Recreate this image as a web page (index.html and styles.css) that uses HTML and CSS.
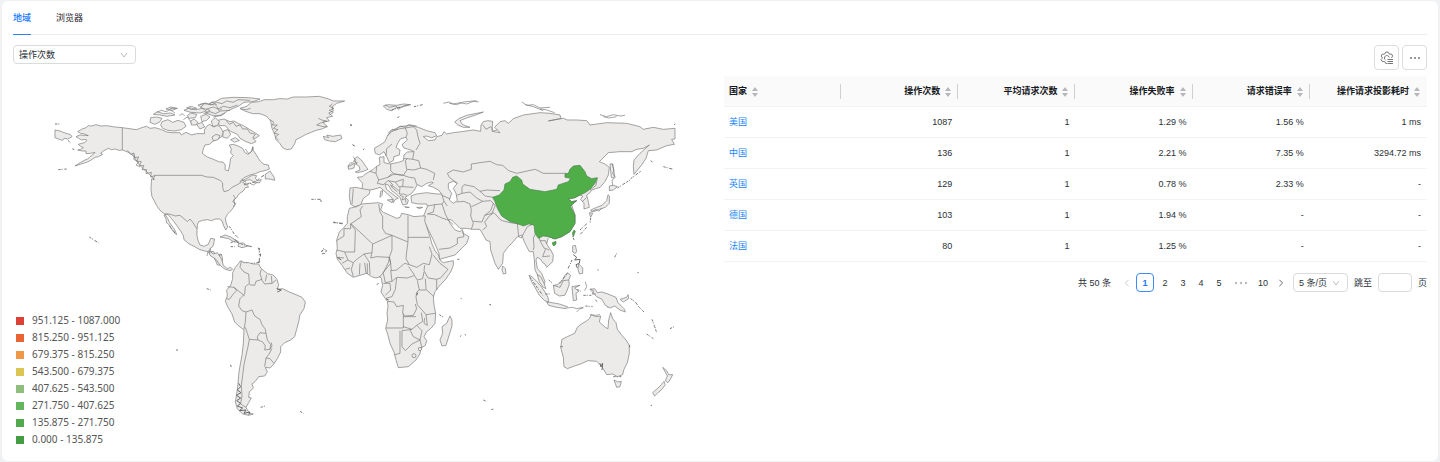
FILE: index.html
```html
<!DOCTYPE html>
<html lang="zh-CN">
<head>
<meta charset="utf-8">
<title>地域</title>
<link rel="stylesheet" href="styles.css">
</head>
<body>
<main class="card">
  <nav class="tabs" role="tablist">
    <button class="tab tab-active" role="tab" aria-selected="true">地域</button>
    <button class="tab" role="tab" aria-selected="false">浏览器</button>
  </nav>
  <div class="content">
    <section class="region">
      <div class="picker metric">
        <select class="picker-control" aria-label="指标"><option>操作次数</option></select>
        <svg class="chevron" viewBox="0 0 10 10"><path d="M2 3l3 4 3-4"/></svg>
      </div>
      <svg class="map" viewBox="13 64 711 384" role="img" aria-label="世界地图">
        <!-- North and Central America -->
        <g transform="translate(40 85) scale(.33333)">
          <path class="land" d="M45 135L60 138 72 143 92 149 96 155 84 162 72 160 68 166 58 163 45 158Z"/>
          <path class="land" d="M247 128L224 126 200 122 183 123 167 119 155 123 145 122 138 128 124 133 113 140 122 145 134 147 145 152 134 151 120 150 108 155 116 160 125 165 135 163 141 166 134 173 125 175 115 178 122 184 130 188 122 193 113 195 126 198 138 198 138 206 152 205 165 202 158 210 150 215 143 222 135 225 122 232 105 243 120 238 140 232 152 226 165 217 175 215 188 208 182 205 190 198 205 190 215 194 225 192 236 196 247 195 258 199 270 204 278 212 286 222 295 236 306 248 318 259 328 268 343 284 335 281 334 293 333 315 336 335 343 348 350 362 360 376 375 388 383 400 388 412 394 420 400 428 406 438 410 449 402 442 394 432 388 420 380 414 378 402 372 390 384 388 392 398 402 410 412 424 422 438 430 452 432 464 446 476 462 484 480 494 494 498 504 500 512 510 522 518 526 525 532 540 545 540 548 522 544 508 524 508 522 500 506 500 511 490 519 484 524 462 512 460 505 478 492 484 480 480 474 466 471 452 471 436 472 420 476 410 488 406 502 404 514 407 526 402 538 402 546 407 550 420 557 435 563 426 558 412 556 400 562 388 572 378 580 368 584 358 582 344 590 338 598 326 610 318 616 308 626 306 616 297 608 292 618 286 630 284 640 290 658 294 664 284 652 286 646 280 650 272 638 270 624 278 600 290 612 278 630 270 646 266 660 260 678 256 688 252 685 240 672 238 662 230 655 220 648 208 640 196 638 185 634 200 624 208 614 202 608 190 596 184 580 178 568 180 574 192 572 204 580 212 572 220 570 234 568 246 565 258 555 254 556 240 550 232 536 230 518 222 502 216 487 205 490 192 495 180 508 178 520 168 534 162 545 155 550 142 542 128 532 120 522 126 508 118 500 124 493 135 494 146 470 146 455 150 438 142 424 150 420 143 396 143 380 141 362 133 345 128 330 130 320 124 305 128 290 134 275 132Z"/>
          <path class="line" d="M247 128V195M343 271H485L500 276 520 277 540 286 548 294 548 308 552 320 566 316 576 307 590 300 604 292M375 386L392 388 405 393 420 391 432 401 442 410 450 402 460 414 468 428 472 430M504 500L501 513M511 490L513 505M516 510L524 508M524 520L532 515 546 508M544 540L535 530"/>
          <path class="land" d="M332 98L350 96 366 100 358 112 344 118 330 112ZM366 110L384 104 398 112 414 106 432 112 438 124 424 134 404 138 384 136 368 130 362 120ZM442 92L452 84 470 88 466 98 448 100ZM452 108L462 102 474 112 468 120 454 120ZM482 94L498 88 510 96 500 106 486 110Z"/>
          <path class="land" d="M340 88L352 80 370 86 392 84 405 90 380 94 360 90ZM378 72L392 66 412 70 396 76ZM432 76L450 68 468 74 486 70 500 78 480 84 452 82ZM474 60L492 56 510 60 500 66 482 66Z"/>
          <path class="land" d="M540 456L556 450 572 456 588 466 596 470 582 471 566 461ZM596 475L610 474 622 484 606 488 594 484ZM676 268L690 258 702 276 704 286 690 282 676 282Z"/>
          <path class="line" d="M262 196L272 208 282 204 284 218 296 216 290 228 304 230 298 242 312 242 306 254 320 254 318 266 334 262 332 276 344 272 340 284M276 206L286 216 280 222 296 232 288 240 300 246M580 330L586 340 578 350 588 356 580 366M605 282L618 292 612 300 628 294 640 300 652 292"/>
          <path class="rough" d="M388 422L408 448M568 424L582 446 598 462M572 485H584M628 484H638M655 488L662 510 656 530M148 456L176 474M55 254L80 252M84 166L92 174M97 191L103 194M45 117H58M600 530L630 536 660 532"/>
        </g>
        <!-- Arctic archipelago, Greenland, Iceland -->
        <g transform="translate(150 85) scale(.33333)">
          <path class="land" d="M178 56L200 48 214 40 250 37 296 38 330 42 310 50 282 52 268 62 250 70 232 78 214 92 190 92 166 84 180 76 152 68 162 56 200 60 188 50Z"/>
          <path class="line" d="M150 58L168 54 182 60 200 52 216 56 230 48 250 52 264 44 300 46M170 72L190 66 204 72 220 64 240 68 262 60M160 86L180 80 196 86 212 78 240 76M190 96L208 92 225 84M200 64L206 76 216 72M110 68L124 64 140 70 126 74ZM20 82L34 76 48 80 60 74 75 84M60 70L80 70M100 104L112 96 124 112M88 92L96 86 104 92"/>
          <path class="land" d="M203 106L222 102 240 110 252 108 266 116 280 122 300 134 316 144 328 152 316 160 308 158 318 170 304 176 288 170 270 160 262 148 240 138 226 122 208 122Z"/>
          <path class="land" d="M184 108L196 98 208 110 202 122 188 124ZM140 118L156 112 164 126 150 132ZM220 138L234 134 242 148 232 160 218 156ZM186 156L198 148 210 152 204 164 190 168ZM242 164L256 158 268 166 254 172Z"/>
          <path class="line" d="M228 106L238 118 250 112 258 124 270 120 278 132 292 132 300 144 316 148 310 156M286 192L296 206 306 198 310 186"/>
          <path class="land" d="M270 70L290 64 304 52 326 50 344 44 370 44 388 41 412 42 430 36 470 36 508 34 536 42 550 48 584 48 560 55 546 66 550 78 536 84 548 94 530 98 538 108 518 112 532 124 516 132 498 136 484 142 468 148 454 156 438 164 434 176 424 192 410 194 398 188 390 176 378 164 374 148 366 130 362 108 350 94 330 86 308 86 284 78Z"/>
          <path class="line" d="M360 104L372 112 366 120 382 120 370 130 384 134 372 144 386 148 376 156 386 166M505 100L518 106 530 108 512 114 500 120 516 124 532 126M548 56L538 64 552 70 538 76 550 82 538 90M272 72L290 74 302 70"/>
          <path class="land" d="M520 154L536 158 530 150 548 154 572 150 576 160 556 170 538 168 524 164Z"/>
          <path class="rough" d="M290 298L318 290 330 278 344 270M484 343H514M600 120L606 121M608 180L613 183"/>
        </g>
        <!-- South America -->
        <g transform="translate(170 240) scale(.33333)">
          <path class="land" d="M117 32L130 42 142 38 155 58 160 76 172 86 182 82 188 88 180 92 166 88 152 78 138 58 120 46Z"/>
          <path class="land" d="M212 62L222 68 236 68 250 72 266 72 272 84 284 94 294 102 308 104 320 116 326 134 322 148 338 146 358 156 378 164 396 172 406 186 402 206 390 224 386 246 380 268 374 290 362 300 344 308 332 320 332 336 322 356 310 374 300 384 286 382 292 396 284 408 266 410 256 424 246 432 250 444 238 456 236 472 244 474 236 488 228 502 238 520 250 522 236 526 218 522 202 506 196 486 200 462 204 432 206 404 210 378 216 346 220 310 222 270 206 258 194 246 186 222 174 202 166 184 172 168 170 150 182 136 188 116 188 98 196 82 206 70Z"/>
          <path class="line" d="M214 64L210 82 222 96 236 102 238 130 226 140 224 162 210 176 206 198 216 212 228 216 226 246 222 268M238 134L254 136 258 124 276 118 270 102 274 88M274 118L284 132 306 130 318 120M290 104L286 124M304 108L306 130M172 140L192 142 200 152 190 162 178 178 170 176M192 142L224 168M228 216L246 210 254 228 270 238 276 254 286 268 288 280 270 278 262 290 264 300 238 298 232 280 226 262M264 300L278 306 286 318 284 330 300 328 302 314 292 300 288 280M300 328L306 318 304 308M306 326L296 344 288 354 284 380M288 354L300 356 312 370M238 298L234 320 228 346 222 374 218 406 214 436 216 468 212 492 228 502"/>
          <path class="line strong" d="M206 430L212 440 202 450 213 458 199 466 212 474 200 482 212 490 202 498 218 504 208 512 228 510 222 520 240 516 236 524M320 146L334 150 322 156"/>
          <path class="rough" d="M268 24V46M268 60V68M110 146L122 150M272 502L286 498M390 514L400 520M182 374L184 384M18 330H24M455 36L460 26 470 32 462 42M182 8L194 4 214 12 228 16 244 20M200 2L190 -2"/>
        </g>
        <!-- Europe and Asia -->
        <g transform="translate(320 90) scale(.33333)">
          <path class="land" d="M90 294L108 292 126 296 128 280 112 262 128 260 136 252 150 244 160 238 168 230 180 224 178 202 192 200 192 218 210 222 232 218 250 212 252 195 262 186 282 185 272 180 252 174 246 164 262 150 258 142 242 146 234 158 228 172 240 180 238 195 222 200 220 212 208 218 200 200 192 185 178 195 166 190 163 175 180 165 195 155 202 138 214 122 240 110 270 106 295 112 320 122 345 128 350 137 335 143 318 138 310 140 325 152 345 150 350 140 366 136 372 125 380 132 400 128 425 125 460 120 482 124 483 105 490 95 503 92 518 94 516 124 540 128 524 112 540 95 555 92 565 100 580 86 610 75 660 68 690 70 720 75 723 85 685 93 730 85 742 90 770 90 800 92 810 105 860 98 920 100 960 110 970 118 1000 112 1030 118 1065 115V147L1055 148 1063 163 1040 167 1010 180 985 182 978 205 965 225 942 253 940 230 942 210 960 190 988 165 970 175 950 178 935 185 900 185 865 188 838 215 855 222 868 232 865 255 855 275 840 292 815 300 810 308 800 315 805 335 808 352 792 357 792 340 782 328 788 318 780 315 765 323 745 327 755 335 770 332 755 345 765 375 765 400 750 425 725 440 705 447 690 440 684 446 680 462 692 480 700 495 698 515 680 532 675 522 668 518 662 508 652 502 648 510 652 535 665 550 675 575 670 590 658 565 645 540 643 510 640 485 628 485 615 460 605 435 590 442 580 455 565 470 550 490 548 520 535 538 525 520 512 480 510 455 498 450 490 435 480 418 455 418 440 415 420 415 410 405 395 390 385 388 390 400 405 420 420 425 427 418 430 430 447 440 440 460 405 495 358 508 357 490 340 450 318 405 308 388 312 375 322 350 320 342 295 342 275 338 273 318 290 312 320 308 350 312 365 312 355 300 340 292 325 287 340 278 334 276 320 280 305 290 292 284 283 300 275 310 262 318 255 322 265 330 262 342 248 345 240 322 228 312 215 302 205 285 195 282 200 298 225 318 235 325 226 328 220 338 216 324 195 305 180 292 165 297 150 300 148 312 130 325 122 345 105 350 92 343 88 320Z"/>
          <path class="sea" d="M385 280L400 274 412 280 400 295 408 310 412 332 400 340 388 330 395 310 385 295Z"/>
          <path class="line" d="M216 162L200 176 198 198M202 138L216 124 240 116 256 114 262 130 258 142M256 114L280 110 290 120 294 140 300 160 288 180M282 185L278 208 262 206 252 206M278 208L296 212 302 234 282 240 262 238 250 256 222 252 212 242 212 222M302 234L320 238 344 250 340 270M262 206L256 212 260 238M170 230L168 250 176 270 172 280 190 284M168 250L150 244M176 270L204 262 216 250M204 262L222 252 250 256 268 262 284 264 290 284M190 284L204 272 226 276 250 268 248 290 236 290 226 276M248 290L280 292M240 292L238 312 250 312 262 316M210 284L224 292 236 302M100 296L96 342M126 296L150 300M366 316L384 324 390 326M365 312L372 334 366 342 344 344 322 348M372 334L382 348M366 342L376 372 384 388M322 372L344 374 366 384 384 390 400 404M344 344L340 366 322 372M410 336L432 334 450 342 454 360 452 378 460 400 454 418M388 262L382 250 400 240 430 246 454 238 454 222 480 218 510 214 530 224 548 226 566 242 590 250 636 240 646 238 670 250 700 250 740 250M412 280L388 262M426 292L432 284 462 290 480 304 496 318 520 322M426 292V310L410 316M426 310L450 306 470 324 488 334 472 342 454 350M480 304L500 300 540 302M488 334L512 332 520 340 512 362 494 376 486 396 460 394M494 376L516 370 526 346 518 340M488 420L500 410 494 396 510 376 522 368 540 388 546 392 570 398 596 402 600 388 636 402M592 398L596 440 604 444M604 444L610 432 622 410 640 402M646 432L640 444 642 470 640 480M656 434L660 452 676 452 680 462M656 434L672 426 684 432 698 446M660 452L672 474 688 480M676 478L668 500 690 498M800 322L788 334M357 478L390 474 412 462 412 444 432 440 428 424M810 300L828 286 832 264"/>
          <path class="china" d="M518 322L538 315 552 300 555 282 570 275 578 262 590 258 605 270 608 282 630 298 675 305 710 298 715 285 745 275 752 265 735 262 735 252 745 250 750 238 760 228 780 226 795 245 800 258 815 266 832 263 825 280 810 298 795 308 780 315 765 323 745 327 755 335 770 332 755 345 752 350 765 375 765 400 750 425 725 440 705 447 685 440 670 438 655 445 645 430 642 405 626 402 610 408 590 400 570 395 545 378 532 355 525 335Z"/>
          <path class="china" d="M697 458L708 454 708 462 702 468 698 464ZM757 430L762 420 766 424 760 440Z"/>
          <!-- Islands around Europe -->
          <path class="land" d="M106 246L120 240 118 230 108 222 104 206 112 200 124 210 130 218 138 230 144 238 130 244 112 248ZM84 228L92 218 104 220 102 234 86 238ZM182 304L188 302 186 316 180 322ZM202 330L220 328 216 338ZM254 350L268 352 258 353ZM290 352H308L298 356Z"/>
          <path class="land" d="M190 48L204 44 230 46 250 42 272 44 250 50 228 54 214 62 200 58ZM404 96L416 86 440 76 470 70 490 66 470 74 440 84 420 92 428 104 450 112 430 112 412 104Z"/>
          <path class="line" d="M195 44L208 52 228 48 236 58 250 48 268 44M370 40L386 36 400 42 420 38 440 42 460 34 476 36M388 40L410 44 430 36 470 32M606 36L620 46 640 44 660 54 690 52M616 44L640 50 670 62M660 56L680 60 704 68M840 74L860 80 880 74 900 78 915 76M850 80L866 84 890 80M204 130L216 118 228 120 240 108 256 112 266 104 290 108"/>
          <path class="line" d="M100 200L106 210 100 214 112 218 106 224M84 230L100 222M206 272L218 284 214 290 232 306M240 316L250 320 246 330 256 326 258 338M488 104L498 118 512 110 520 122 532 120"/>
          <path class="rough" d="M215 60L240 52M282 50L308 44M130 180L132 176M232 83L238 80M90 104L96 106M98 164L104 168M0 332L6 334M40 396L70 402"/>
          <!-- Sakhalin, Japan, Korea -->
          <path class="land" d="M870 222L878 222 884 258 880 264 874 262ZM868 288L880 286 892 290 880 300 868 302ZM812 360L830 352 846 346 860 332 864 314 868 318 868 340 856 352 838 358 818 366ZM808 368L818 370 812 382Z"/>
          <path class="line" d="M876 220L882 240 878 250 886 262 876 270 878 286M812 366L830 358 836 364 846 354"/>
          <path class="rough" d="M892 294L930 270M932 266L962 244M812 384L810 398M800 412L780 434M992 212L1000 218M1030 230L1060 238M1062 104L1066 102"/>
        </g>
        <!-- Africa -->
        <g transform="translate(320 180) scale(.33333)">
          <path class="land" d="M88 85L110 80 125 72 150 70 175 68 188 72 182 90 190 97 215 108 230 115 240 112 245 100 265 104 282 110 304 108 316 108 314 122 322 146 330 170 336 192 345 212 355 225 360 240 370 248 400 242 400 256 392 276 375 300 358 318 345 335 340 352 342 375 347 400 345 430 334 444 320 455 312 470 320 482 316 496 302 505 300 522 288 540 265 560 235 563 228 540 222 516 210 490 204 466 197 445 203 420 201 400 204 380 202 364 192 350 183 336 188 316 184 296 180 290 168 294 155 290 140 280 120 286 100 292 82 280 66 256 52 238 48 220 52 206 50 180 58 156 72 142 82 130 82 110Z"/>
          <path class="line" d="M72 146H92V132L124 110 120 90 128 78M92 130L158 192 216 166 196 160 188 146 188 110 180 96 176 72M72 146V168L50 182M92 132L106 150 104 216 76 216 50 210M158 192L156 218 132 222 108 240 100 248 84 240 74 216M216 166L264 186V106M264 172H328M264 186L260 216 258 236 268 254 254 250 230 270 214 272 212 250 208 232 216 210 216 166M156 218L152 234 170 230 208 232 206 246 190 278 178 292M132 222L148 246 150 284M120 250L118 284M134 248L138 280M142 250V282M100 248L94 268 100 290M84 240L66 250M76 268L90 264M52 232L72 234M208 232L212 250 188 280M190 280L196 308 216 304 212 270M216 304L230 292 262 294 284 286 266 260M268 254L290 262 310 250 328 254 336 222 328 200M314 256L312 272 324 294 350 298 362 294 384 268 360 250 340 226M350 298V330M312 276L308 296 292 300 284 288M316 296L318 328 342 350M292 302L298 330 290 336 288 352 292 374 308 392 318 404 346 400M298 330H318M230 294L226 328 216 350 200 354M190 310H210L212 330 196 346M202 364L222 366 230 380 250 376 248 400 256 408 280 406 290 386 286 372M250 400V444H198M250 440L276 448 290 436 308 424 304 398M250 410L288 410M276 448L246 452V500L256 512 276 492 300 480 306 452 290 436M240 452V520L224 524M270 450L280 470 300 480 306 504M318 404L322 436 312 430 314 414"/>
          <circle class="land" cx="282" cy="527" r="6"/>
          <circle class="land" cx="300" cy="507" r="5"/>
          <path class="land" d="M390 408L396 420 396 438 388 464 378 496 366 498 360 480 368 460 366 440 380 430Z"/>
          <path class="line strong" d="M52 232L64 240M290 346L294 338M198 356L206 360"/>
          <path class="rough" d="M358 404L370 412M420 470L424 466M434 463L438 466M4 214L14 208M6 222L16 218M40 128L68 130M412 238H418M422 356H425M510 374H513M170 314L176 310"/>
        </g>
        <!-- South-East Asia and Oceania -->
        <g transform="translate(480 220) scale(.33333)">
          <path class="land" d="M68 138L76 146 78 160 70 162 66 150ZM147 165L158 172 170 184 184 200 196 218 204 232 206 246 194 242 178 226 166 204 154 184ZM200 246L216 248 238 252 262 260 258 266 230 262 206 256ZM172 164L182 170 192 190 198 206 190 202 178 186ZM220 196L232 194 246 184 254 168 262 158 272 166 266 180 268 192 262 210 254 226 238 228 224 220ZM278 78L286 76 290 94 286 100 278 96ZM296 132L308 144 308 160 298 162 294 148ZM276 200L300 196 284 204 296 214 288 220 290 240 280 242 278 222Z"/>
          <path class="line" d="M220 196L240 202 250 182 266 180M384 222V264"/>
          <path class="land" d="M330 208L344 206 352 218 366 216 384 222 408 232 414 248 432 266 436 276 420 270 404 258 390 264 376 256 366 238 350 230ZM420 238L440 232 444 224 446 236 430 246Z"/>
          <path class="land" d="M392 278L398 296 408 308 412 328 424 344 438 360 448 376 448 400 442 428 432 448 428 464 412 470 398 462 380 464 372 450 364 438 350 424 324 422 302 432 284 438 262 446 252 440 250 412 242 382 246 358 262 350 284 340 292 322 304 312 318 304 328 296 334 284 348 290 362 288 358 306 376 322 384 326 386 300ZM402 480L414 486 424 484 420 500 410 502Z"/>
          <path class="land" d="M548 442L560 452 566 464 578 464 572 476 564 488 556 482 562 468ZM552 484L556 494 546 508 532 520 524 528 518 518 532 506 544 494Z"/>
          <path class="line strong" d="M280 104L290 112 284 120 300 118 298 130 288 134 292 144M360 430L362 440 368 430 366 450M248 380H242"/>
          <path class="line" d="M260 264L278 262 290 266 310 262M290 276L300 266 310 264M316 186L320 200 314 212M332 206L342 214 336 222 348 222M330 284L346 286 360 284"/>
          <path class="rough" d="M276 120L264 146M150 172L188 226M316 258L338 260M310 226L334 226M292 208L302 214M346 240L354 246M452 236L466 246 476 260 492 276M282 60L278 48M516 298L524 320 530 338M500 342L520 356M570 326L586 318M400 470H424M448 375L450 384M352 150H356M404 112L410 100M472 158H476M28 254H32M512 556H516M10 540L20 544M34 568H40M300 30L324 8M238 190L262 160M196 222L212 222M206 180L218 190"/>
        </g>
      </svg>
      <ul class="legend">
        <li><i class="swatch s1"></i>951.125 - 1087.000</li>
        <li><i class="swatch s2"></i>815.250 - 951.125</li>
        <li><i class="swatch s3"></i>679.375 - 815.250</li>
        <li><i class="swatch s4"></i>543.500 - 679.375</li>
        <li><i class="swatch s5"></i>407.625 - 543.500</li>
        <li><i class="swatch s6"></i>271.750 - 407.625</li>
        <li><i class="swatch s7"></i>135.875 - 271.750</li>
        <li><i class="swatch s8"></i>0.000 - 135.875</li>
      </ul>
    </section>
    <section class="details">
      <div class="toolbar">
        <button class="tool" aria-label="列设置"><svg viewBox="0 0 14 14"><path d="M7 12.6H5.8L5.3 11.2 3.8 10.4 2.3 10.7 1.1 8.6 2.1 7.5V6.2L1.1 5.1 2.3 3 3.8 3.3 5.1 2.5 5.7 1.1H8.1L8.7 2.5 10 3.3 11.5 3 12.7 5.1 11.7 6.3V7M5.6 9A2.4 2.4 0 1 1 9.2 6.6M7.5 8.5H13M7.5 10.5H13M7.5 12.5H13"/></svg></button>
        <button class="tool" aria-label="更多"><svg class="dots" viewBox="0 0 14 14"><circle cx="3" cy="7" r="1"/><circle cx="7" cy="7" r="1"/><circle cx="11" cy="7" r="1"/></svg></button>
      </div>
      <table class="table">
        <thead>
          <tr>
            <th>国家<svg class="sorter" viewBox="0 0 6 10"><path d="M0 4l3-4 3 4zM0 6h6l-3 4z"/></svg></th>
            <th>操作次数<svg class="sorter" viewBox="0 0 6 10"><path d="M0 4l3-4 3 4zM0 6h6l-3 4z"/></svg></th>
            <th>平均请求次数<svg class="sorter" viewBox="0 0 6 10"><path d="M0 4l3-4 3 4zM0 6h6l-3 4z"/></svg></th>
            <th>操作失败率<svg class="sorter" viewBox="0 0 6 10"><path d="M0 4l3-4 3 4zM0 6h6l-3 4z"/></svg></th>
            <th>请求错误率<svg class="sorter" viewBox="0 0 6 10"><path d="M0 4l3-4 3 4zM0 6h6l-3 4z"/></svg></th>
            <th>操作请求投影耗时<svg class="sorter" viewBox="0 0 6 10"><path d="M0 4l3-4 3 4zM0 6h6l-3 4z"/></svg></th>
          </tr>
        </thead>
        <tbody>
          <tr><td><a href="#">美国</a></td><td>1087</td><td>1</td><td>1.29 %</td><td>1.56 %</td><td>1 ms</td></tr>
          <tr><td><a href="#">中国</a></td><td>136</td><td>1</td><td>2.21 %</td><td>7.35 %</td><td>3294.72 ms</td></tr>
          <tr><td><a href="#">英国</a></td><td>129</td><td>1</td><td>0.78 %</td><td>2.33 %</td><td>-</td></tr>
          <tr><td><a href="#">德国</a></td><td>103</td><td>1</td><td>1.94 %</td><td>-</td><td>-</td></tr>
          <tr><td><a href="#">法国</a></td><td>80</td><td>1</td><td>1.25 %</td><td>-</td><td>-</td></tr>
        </tbody>
      </table>
      <nav class="pagination" aria-label="分页">
        <span class="total">共 50 条</span>
        <button class="page page-disabled" aria-label="上一页" disabled><svg viewBox="0 0 10 10"><path d="M7 1L3 5l4 4"/></svg></button>
        <button class="page page-current" aria-current="page">1</button>
        <button class="page">2</button>
        <button class="page">3</button>
        <button class="page">4</button>
        <button class="page">5</button>
        <button class="page page-more" aria-label="向后 5 页"><svg class="more-dots" viewBox="0 0 14 4"><circle cx="2" cy="2" r="1.2"/><circle cx="7" cy="2" r="1.2"/><circle cx="12" cy="2" r="1.2"/></svg></button>
        <button class="page">10</button>
        <button class="page" aria-label="下一页"><svg viewBox="0 0 10 10"><path d="M3 1l4 4-4 4"/></svg></button>
        <div class="picker page-size">
          <select class="picker-control" aria-label="每页条数"><option>5 条/页</option></select>
          <svg class="chevron" viewBox="0 0 10 10"><path d="M2 3l3 4 3-4"/></svg>
        </div>
        <label class="jump">跳至<input class="jump-input" type="text">页</label>
      </nav>
    </section>
  </div>
</main>
</body>
</html>
```
FILE: styles.css
```css
* {
  box-sizing: border-box;
}

body {
  margin: 0;
  padding: 1px 2px;
  background: #f0f1f2;
  color: #2b3036;
  font-family: "Liberation Sans", "Noto Sans CJK SC", sans-serif;
  font-size: 9px;
  line-height: 14px;
}

button,
select,
input {
  margin: 0;
  padding: 0;
  border: 0;
  background: none;
  color: inherit;
  font: inherit;
}

.card {
  padding: 0 11px 13px;
  border-radius: 6px;
  background: #fff;
}

.tabs {
  display: flex;
  gap: 25px;
  height: 34px;
  border-bottom: 1px solid #ebecee;
}

.tab {
  height: 34px;
  border-bottom: 1px solid transparent;
  color: #1f2328;
}

.tab-active {
  border-bottom-color: #2f80f5;
  color: #1677ff;
  font-weight: 500;
}

.content {
  display: grid;
  grid-template-columns: 711fr 703fr;
  padding-top: 10px;
}

.region {
  position: relative;
}

.picker {
  display: grid;
  align-items: center;
  height: 19px;
  border: 1px solid #d9dbde;
  border-radius: 4px;
}

.picker > * {
  grid-area: 1 / 1;
}

.picker-control {
  width: 100%;
  height: 17px;
  padding-left: 5px;
  appearance: none;
}

.metric {
  width: 123px;
}

.chevron {
  justify-self: end;
  width: 10px;
  height: 10px;
  margin-right: 6px;
  fill: none;
  stroke: #b9bcc0;
  pointer-events: none;
}

.map {
  display: block;
  width: 100%;
  fill: none;
  stroke: #777;
  stroke-width: 2;
  stroke-linejoin: round;
}

.land {
  fill: #edebea;
}

.sea {
  fill: #fff;
}

.china {
  fill: #50ae49;
  stroke: #47824a;
}

.rough {
  stroke: #777;
  stroke-width: 3;
  stroke-dasharray: 7 3 3 5 10 4;
}

.strong {
  stroke: #666;
  stroke-width: 3;
}

.legend {
  position: absolute;
  bottom: 0;
  left: 3px;
  margin: 0;
  padding: 0;
  color: #555;
  font-family: "Noto Sans", sans-serif;
  font-size: 10px;
  line-height: 17px;
  list-style: none;
}

.legend li {
  display: flex;
  align-items: center;
  gap: 8px;
}

.swatch {
  width: 8px;
  height: 8px;
}

.s1 { background: #df4036; }
.s2 { background: #e96536; }
.s3 { background: #ef9846; }
.s4 { background: #dcc653; }
.s5 { background: #8fbe7c; }
.s6 { background: #64b65e; }
.s7 { background: #50aa4c; }
.s8 { background: #459c45; }

.toolbar {
  display: flex;
  justify-content: flex-end;
  gap: 3px;
  padding-bottom: 6px;
}

.tool {
  display: grid;
  place-items: center;
  width: 25px;
  height: 25px;
  border: 1px solid #dcdddf;
  border-radius: 4px;
}

.tool svg {
  width: 14px;
  height: 14px;
  fill: none;
  stroke: #777;
  stroke-width: 1;
}

.tool .dots {
  fill: #777;
  stroke: none;
}

.table {
  width: 100%;
  border-collapse: separate;
  border-spacing: 0;
  table-layout: fixed;
}

.table th,
.table td {
  height: 31px;
  padding: 0 6px 0 5px;
  border-bottom: 1px solid #f3f3f4;
  text-align: right;
}

.table th:first-child,
.table td:first-child {
  text-align: left;
}

.table th {
  padding-right: 7px;
  background: linear-gradient(#cfd0d2, #cfd0d2) right center / 1px 15px no-repeat #fafafa;
  color: #16191d;
  font-weight: 700;
  white-space: nowrap;
}

.table th:last-child {
  background: #fafafa;
}

.sorter {
  width: 6px;
  height: 10px;
  margin-left: 5px;
  fill: #b5b7ba;
  vertical-align: middle;
}

a {
  color: #1b86f5;
  text-decoration: none;
}

.pagination {
  display: flex;
  align-items: center;
  justify-content: flex-end;
  padding-top: 11px;
}

.total {
  margin-right: 7px;
}

.page {
  display: grid;
  place-items: center;
  width: 18px;
  height: 19px;
  border-radius: 4px;
}

.page svg {
  width: 8px;
  height: 8px;
  fill: none;
  stroke: #444;
}

.page-disabled svg {
  stroke: #bbb;
}

.page-current {
  margin-right: 2px;
  border: 1px solid #3e8af7;
  color: #1677ff;
  font-weight: 700;
}

.page-more {
  width: 26px;
}

.page .more-dots {
  width: 14px;
  height: 4px;
  fill: #bbb;
  stroke: none;
}

.page-size {
  width: 55px;
  margin-left: 3px;
}

.jump {
  display: flex;
  align-items: center;
  gap: 6px;
  margin-left: 6px;
}

.jump-input {
  width: 34px;
  height: 19px;
  border: 1px solid #d9dbde;
  border-radius: 4px;
}
```
